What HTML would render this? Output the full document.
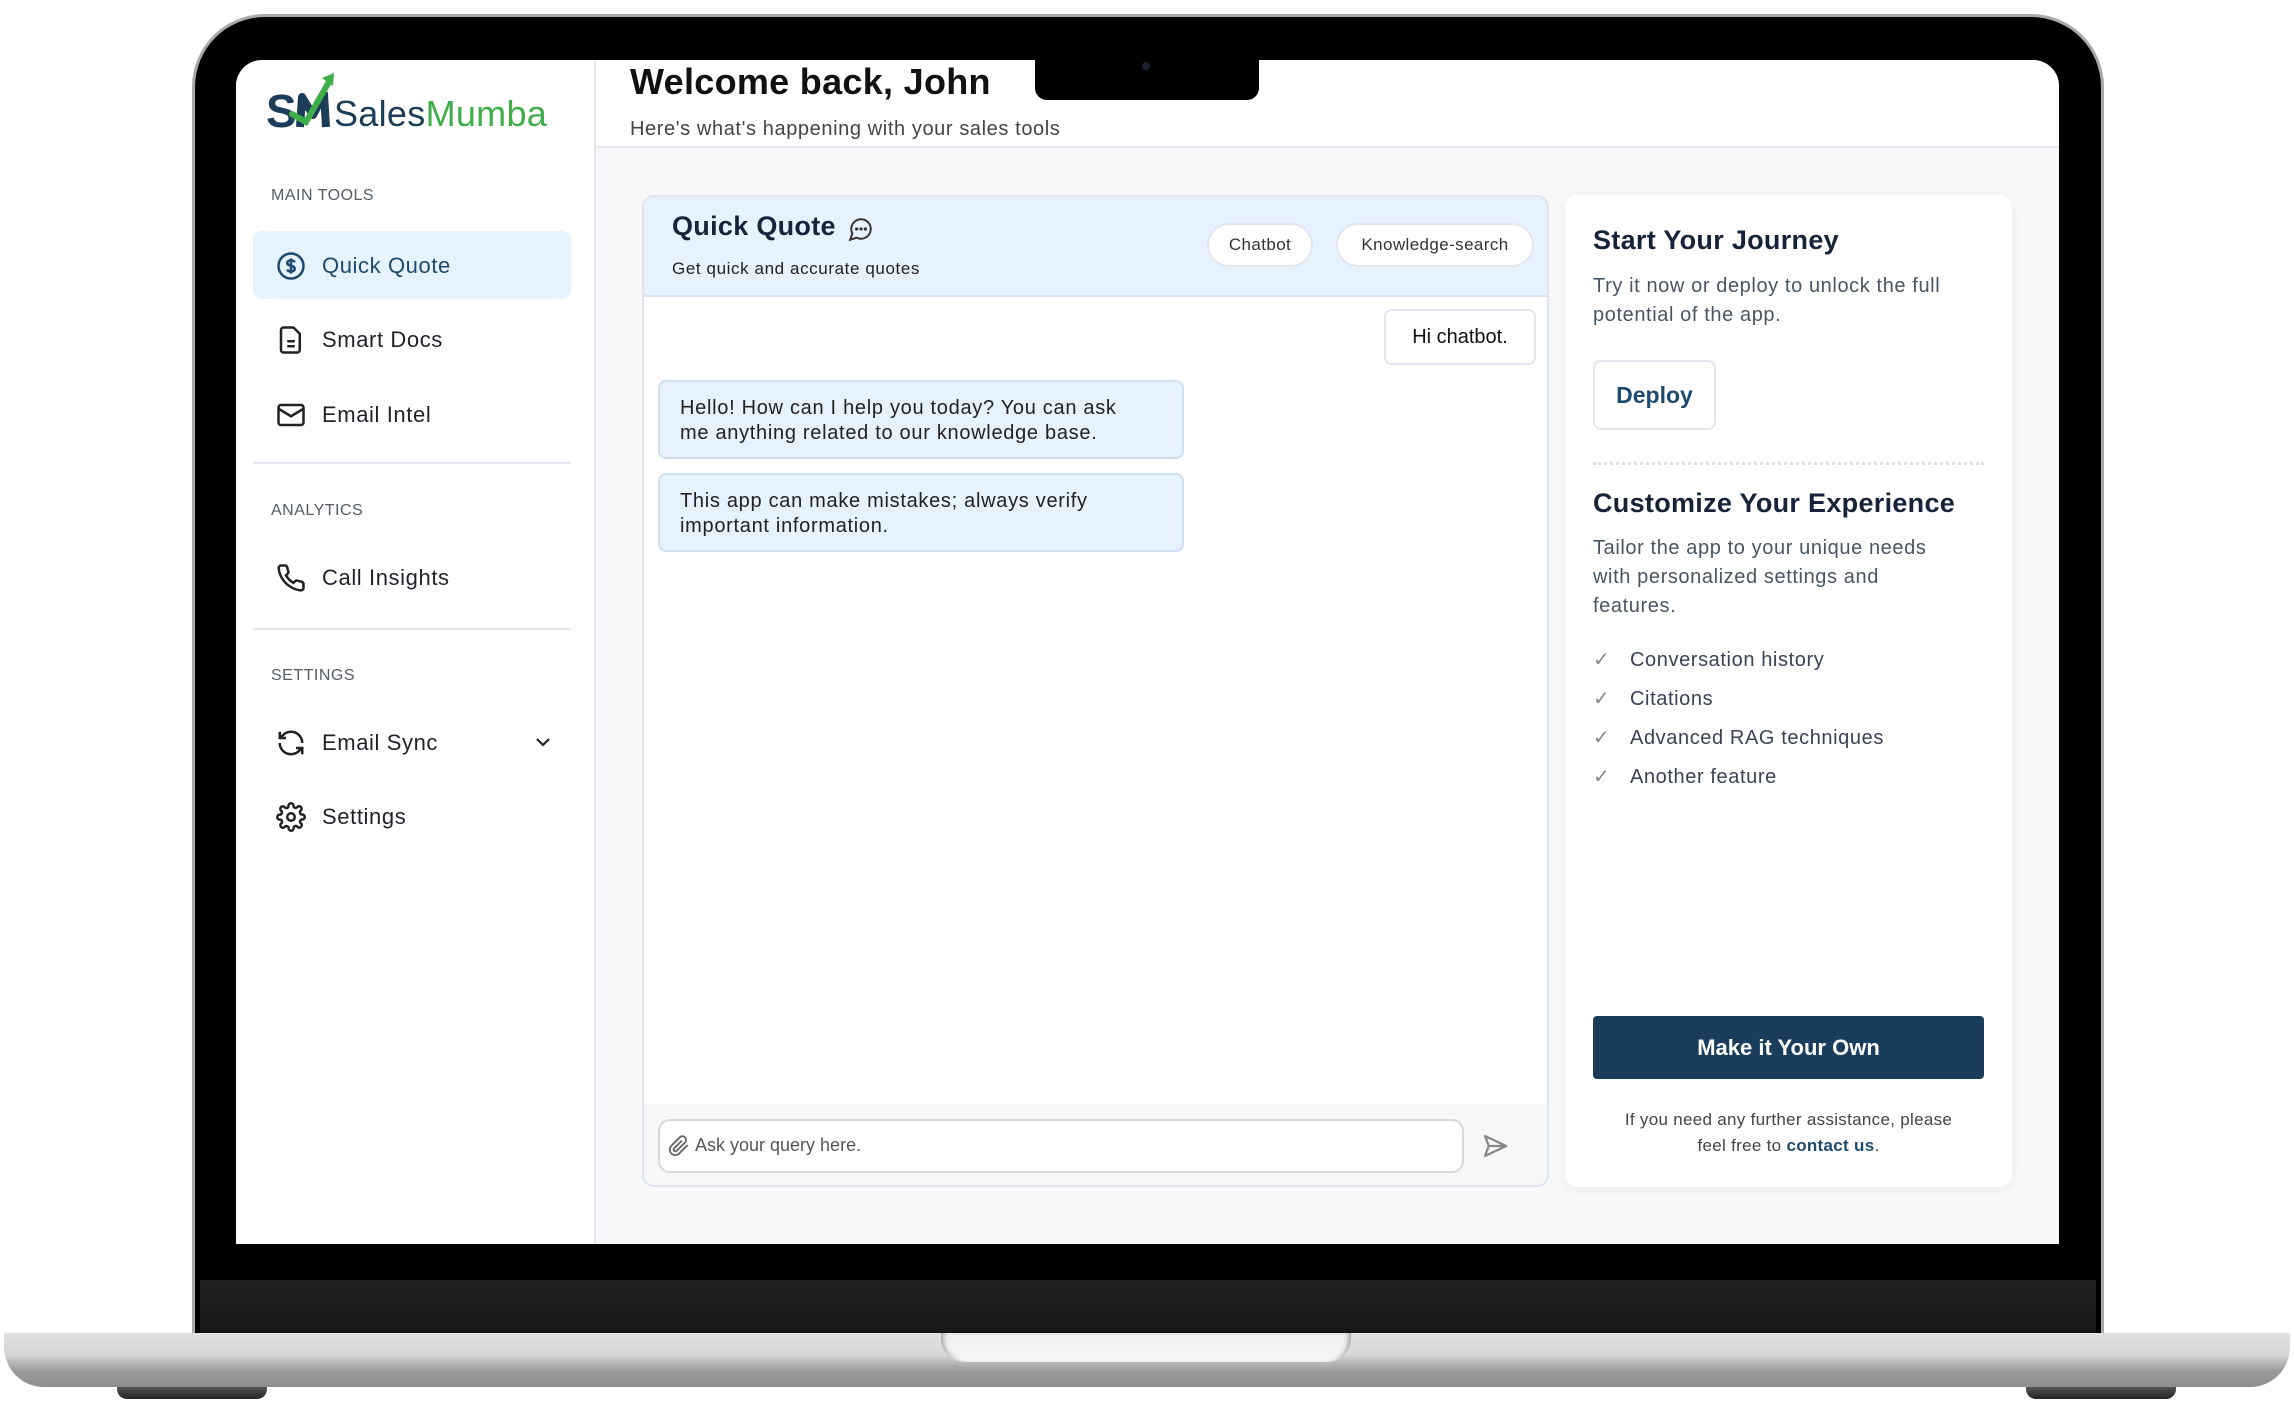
<!DOCTYPE html>
<html><head><meta charset="utf-8"><style>
*{box-sizing:border-box;margin:0;padding:0}
body{width:2294px;height:1414px;background:#fff;position:relative;overflow:hidden;font-family:"Liberation Sans",sans-serif;color:#1f2937}
.a{position:absolute}
.lid{left:195px;top:17px;width:1906px;height:1330px;background:#000;border-radius:70px 70px 0 0;box-shadow:0 0 0 3px #a9a9a9}
.screen{left:236px;top:60px;width:1823px;height:1184px;background:#f7f8fa;border-radius:26px 26px 0 0;overflow:hidden}
.chin{left:200px;top:1280px;width:1896px;height:54px;background:linear-gradient(#222,#161616)}
.base{left:4px;top:1333px;width:2286px;height:54px;border-radius:0 0 40px 40px;background:linear-gradient(#e2e2e2,#d6d6d6 40%,#9a9b9d 70%,#8d8e90)}
.notch2{left:941px;top:1333px;width:410px;height:29px;background:linear-gradient(#efefef,#f7f7f7);border-radius:0 0 24px 24px;box-shadow:inset 6px 0 6px -4px #999,inset -6px 0 6px -4px #999}
.foot{top:1387px;width:150px;height:12px;background:linear-gradient(#555,#222);border-radius:0 0 10px 10px}
.side{left:0;top:0;width:360px;height:1184px;background:#fff;border-right:2px solid #e5e7f0}
.hdr{left:360px;top:0;width:1463px;height:88px;background:#fff;border-bottom:2px solid #e5e7f0}
.lbl{font-size:16px;color:#555c66;letter-spacing:.5px}
.nav{left:17px;width:318px;height:68px;font-size:22px;color:#1f2329;letter-spacing:.6px}
.nav span{position:absolute;left:69px;top:22px}
.nav svg{position:absolute;left:23px;top:20px}
.div{left:17px;width:318px;height:2px;background:#e3e6f2}
.card{background:#fff;border-radius:12px}
.pill{border:2px solid #e3e6ef;border-radius:22px;background:#fff;font-size:17px;color:#333;text-align:center;line-height:40px;letter-spacing:.4px}
.bub{background:#e6f2fd;border:2px solid #cfe0f3;border-radius:8px;font-size:20px;line-height:25px;color:#222;padding:14px 40px 14px 20px;letter-spacing:.7px}
.chk{font-size:20px;color:#3b4256;letter-spacing:.6px}
.sp{letter-spacing:.6px}
</style></head><body>
<div class="a lid"></div>
<div class="a chin"></div>
<div class="a base"></div>
<div class="a notch2"></div>
<div class="a foot" style="left:117px"></div>
<div class="a foot" style="left:2026px"></div>
<div class="a screen">
  <div class="a side">
    <svg class="a" style="left:30px;top:10px" width="100" height="70" viewBox="0 0 100 70">
      <text x="0" y="57" font-family="Liberation Sans" font-weight="bold" font-size="46" fill="#1c3d5a">S</text>
      <path d="M34 57 L36 27 L47 45 L58 24 L60 57" fill="none" stroke="#1c3d5a" stroke-width="8" stroke-linejoin="round"/>
      <path d="M26 44 L40 52 L64 10" fill="none" stroke="#3fae49" stroke-width="6" stroke-linecap="round"/>
      <path d="M56 8 L68 3 L67 16 Z" fill="#3fae49"/>
    </svg>
    <div class="a" style="left:98px;top:33px;font-size:36px;letter-spacing:.3px"><span style="color:#1c3d5a">Sales</span><span style="color:#3fae49">Mumba</span></div>
    <div class="a lbl" style="left:35px;top:127px">MAIN TOOLS</div>
    <div class="a nav" style="top:171px;background:#e6f2fd;border-radius:10px;color:#1e4a6e"><svg width="30" height="30" viewBox="0 0 24 24" fill="none" stroke="#1e4a6e" stroke-width="2"><circle cx="12" cy="12" r="10"/><path d="M15 9c-.5-1-1.6-1.5-3-1.5-1.8 0-3 .9-3 2.1 0 2.8 6 1.6 6 4.6 0 1.2-1.3 2.2-3 2.2-1.5 0-2.7-.6-3.1-1.6M12 6v12"/></svg><span>Quick Quote</span></div>
    <div class="a nav" style="top:245px"><svg width="30" height="30" viewBox="0 0 24 24" fill="none" stroke="#222" stroke-width="2"><path d="M6 2h8l5 5v13a2 2 0 0 1-2 2H6a2 2 0 0 1-2-2V4a2 2 0 0 1 2-2z"/><path d="M9 13h6M9 17h6"/></svg><span>Smart Docs</span></div>
    <div class="a nav" style="top:320px"><svg width="30" height="30" viewBox="0 0 24 24" fill="none" stroke="#222" stroke-width="2"><rect x="2" y="4" width="20" height="16" rx="2"/><path d="M2 7l10 6 10-6"/></svg><span>Email Intel</span></div>
    <div class="a div" style="top:402px"></div>
    <div class="a lbl" style="left:35px;top:442px">ANALYTICS</div>
    <div class="a nav" style="top:483px"><svg width="30" height="30" viewBox="0 0 24 24" fill="none" stroke="#222" stroke-width="2"><path d="M22 16.9v3a2 2 0 0 1-2.2 2 19.8 19.8 0 0 1-8.6-3.1 19.5 19.5 0 0 1-6-6A19.8 19.8 0 0 1 2.1 4.2 2 2 0 0 1 4.1 2h3a2 2 0 0 1 2 1.7c.1 1 .4 1.9.7 2.8a2 2 0 0 1-.5 2.1L8 9.9a16 16 0 0 0 6 6l1.3-1.3a2 2 0 0 1 2.1-.4c.9.3 1.8.6 2.8.7a2 2 0 0 1 1.7 2z"/></svg><span>Call Insights</span></div>
    <div class="a div" style="top:568px"></div>
    <div class="a lbl" style="left:35px;top:607px">SETTINGS</div>
    <div class="a nav" style="top:648px"><svg width="30" height="30" viewBox="0 0 24 24" fill="none" stroke="#222" stroke-width="2"><path d="M21 12a9 9 0 0 0-15.5-6.2L3 8M3 3v5h5M3 12a9 9 0 0 0 15.5 6.2L21 16M21 21v-5h-5"/></svg><span>Email Sync</span><svg style="left:278px;top:22px" width="24" height="24" viewBox="0 0 24 24" fill="none" stroke="#222" stroke-width="2.2"><path d="M6 9l6 6 6-6"/></svg></div>
    <div class="a nav" style="top:722px"><svg width="30" height="30" viewBox="0 0 24 24" fill="none" stroke="#222" stroke-width="2"><circle cx="12" cy="12" r="3"/><path d="M19.4 15a1.7 1.7 0 0 0 .3 1.8l.1.1a2 2 0 1 1-2.8 2.8l-.1-.1a1.7 1.7 0 0 0-1.8-.3 1.7 1.7 0 0 0-1 1.5V21a2 2 0 1 1-4 0v-.1a1.7 1.7 0 0 0-1.1-1.5 1.7 1.7 0 0 0-1.8.3l-.1.1a2 2 0 1 1-2.8-2.8l.1-.1a1.7 1.7 0 0 0 .3-1.800 1.7 1.7 0 0 0-1.5-1H3a2 2 0 1 1 0-4h.1a1.7 1.7 0 0 0 1.5-1.1 1.7 1.7 0 0 0-.3-1.8l-.1-.1a2 2 0 1 1 2.8-2.8l.1.1a1.7 1.7 0 0 0 1.8.3H9a1.7 1.7 0 0 0 1-1.5V3a2 2 0 1 1 4 0v.1a1.7 1.7 0 0 0 1 1.5 1.7 1.7 0 0 0 1.8-.3l.1-.1a2 2 0 1 1 2.8 2.8l-.1.1a1.7 1.7 0 0 0-.3 1.8V9a1.7 1.7 0 0 0 1.5 1H21a2 2 0 1 1 0 4h-.1a1.7 1.7 0 0 0-1.5 1z"/></svg><span>Settings</span></div>
  </div>
  <div class="a hdr">
    <div class="a" style="left:34px;top:1px;font-size:36px;font-weight:bold;color:#111;letter-spacing:.3px">Welcome back, John</div>
    <div class="a sp" style="left:34px;top:58px;font-size:20px;color:#444">Here's what's happening with your sales tools</div>
  </div>
  <div class="a" style="left:799px;top:0;width:224px;height:40px;background:#000;border-radius:0 0 12px 12px"></div>
  <div class="a" style="left:906px;top:2px;width:8px;height:8px;border-radius:50%;background:#1a2233"></div>
  <div class="a card" style="left:406px;top:135px;width:907px;height:992px;border:2px solid #e2e4f0;overflow:hidden">
    <div class="a" style="left:0;top:0;width:907px;height:100px;background:#e6f2fd;border-bottom:2px solid #d8e4f2"></div>
    <div class="a" style="left:28px;top:14px;font-size:27px;font-weight:bold;color:#16233a;letter-spacing:.3px">Quick Quote</div>
    <svg class="a" style="left:204px;top:19px" width="26" height="26" viewBox="0 0 24 24" fill="none" stroke="#333" stroke-width="1.8"><path d="M7.9 20A9 9 0 1 0 4 16.1L2 22z"/><circle cx="8" cy="12" r=".6" fill="#333"/><circle cx="12" cy="12" r=".6" fill="#333"/><circle cx="16" cy="12" r=".6" fill="#333"/></svg>
    <div class="a sp" style="left:28px;top:62px;font-size:17px;color:#222">Get quick and accurate quotes</div>
    <div class="a pill" style="left:563px;top:26px;width:106px;height:44px">Chatbot</div>
    <div class="a pill" style="left:692px;top:26px;width:198px;height:44px">Knowledge-search</div>
    <div class="a" style="left:740px;top:112px;width:152px;height:56px;background:#fff;border:2px solid #e2e4ef;border-radius:8px;font-size:20px;line-height:52px;text-align:center;color:#111">Hi chatbot.</div>
    <div class="a bub" style="left:14px;top:183px;width:526px;height:79px">Hello! How can I help you today? You can ask me anything related to our knowledge base.</div>
    <div class="a bub" style="left:14px;top:276px;width:526px;height:79px">This app can make mistakes; always verify important information.</div>
    <div class="a" style="left:0;top:907px;width:907px;height:85px;background:#f7f7f8"></div>
    <div class="a" style="left:14px;top:922px;width:806px;height:54px;background:#fff;border:2px solid #d8d8dc;border-radius:12px"></div>
    <svg class="a" style="left:24px;top:938px" width="22" height="22" viewBox="0 0 24 24" fill="none" stroke="#666" stroke-width="2"><path d="M21.4 11l-9.2 9.2a6 6 0 0 1-8.5-8.5l9.2-9.2a4 4 0 0 1 5.7 5.7l-9.2 9.2a2 2 0 0 1-2.8-2.8l8.5-8.5"/></svg>
    <div class="a" style="left:51px;top:938px;font-size:18px;color:#555">Ask your query here.</div>
    <svg class="a" style="left:836px;top:934px" width="30" height="30" viewBox="0 0 24 24" fill="none" stroke="#888" stroke-width="1.8" stroke-linejoin="round"><path d="M4 4l17 8-17 8 3-8z M7 12h14"/></svg>
  </div>
  <div class="a card" style="left:1329px;top:135px;width:447px;height:992px;box-shadow:0 2px 10px rgba(0,0,0,.06)">
    <div class="a" style="left:28px;top:30px;font-size:27px;font-weight:bold;color:#16233a;letter-spacing:.3px">Start Your Journey</div>
    <div class="a sp" style="left:28px;top:77px;width:380px;font-size:20px;line-height:29px;color:#4a5563">Try it now or deploy to unlock the full potential of the app.</div>
    <div class="a" style="left:28px;top:165px;width:123px;height:70px;border:2px solid #e3e6ef;border-radius:8px;font-size:23px;font-weight:bold;color:#1e4a6e;text-align:center;line-height:66px">Deploy</div>
    <div class="a" style="left:28px;top:267px;width:391px;border-top:3px dotted #dde0e6"></div>
    <div class="a" style="left:28px;top:293px;font-size:27px;font-weight:bold;color:#16233a;letter-spacing:.3px">Customize Your Experience</div>
    <div class="a sp" style="left:28px;top:339px;width:370px;font-size:20px;line-height:29px;color:#4a5563">Tailor the app to your unique needs with personalized settings and features.</div>
    <div class="a chk" style="left:28px;top:446px;line-height:39px">
      <div><span style="color:#888;display:inline-block;width:37px">✓</span>Conversation history</div>
      <div><span style="color:#888;display:inline-block;width:37px">✓</span>Citations</div>
      <div><span style="color:#888;display:inline-block;width:37px">✓</span>Advanced RAG techniques</div>
      <div><span style="color:#888;display:inline-block;width:37px">✓</span>Another feature</div>
    </div>
    <div class="a" style="left:28px;top:821px;width:391px;height:63px;background:#1b3d5c;border-radius:4px;color:#fff;font-size:22px;font-weight:bold;text-align:center;line-height:63px">Make it Your Own</div>
    <div class="a" style="left:50px;top:912px;width:347px;text-align:center;font-size:17px;line-height:26px;color:#444;letter-spacing:.3px">If you need any further assistance, please feel free to <b style="color:#1e4a6e">contact us</b>.</div>
  </div>
</div>
</body></html>
